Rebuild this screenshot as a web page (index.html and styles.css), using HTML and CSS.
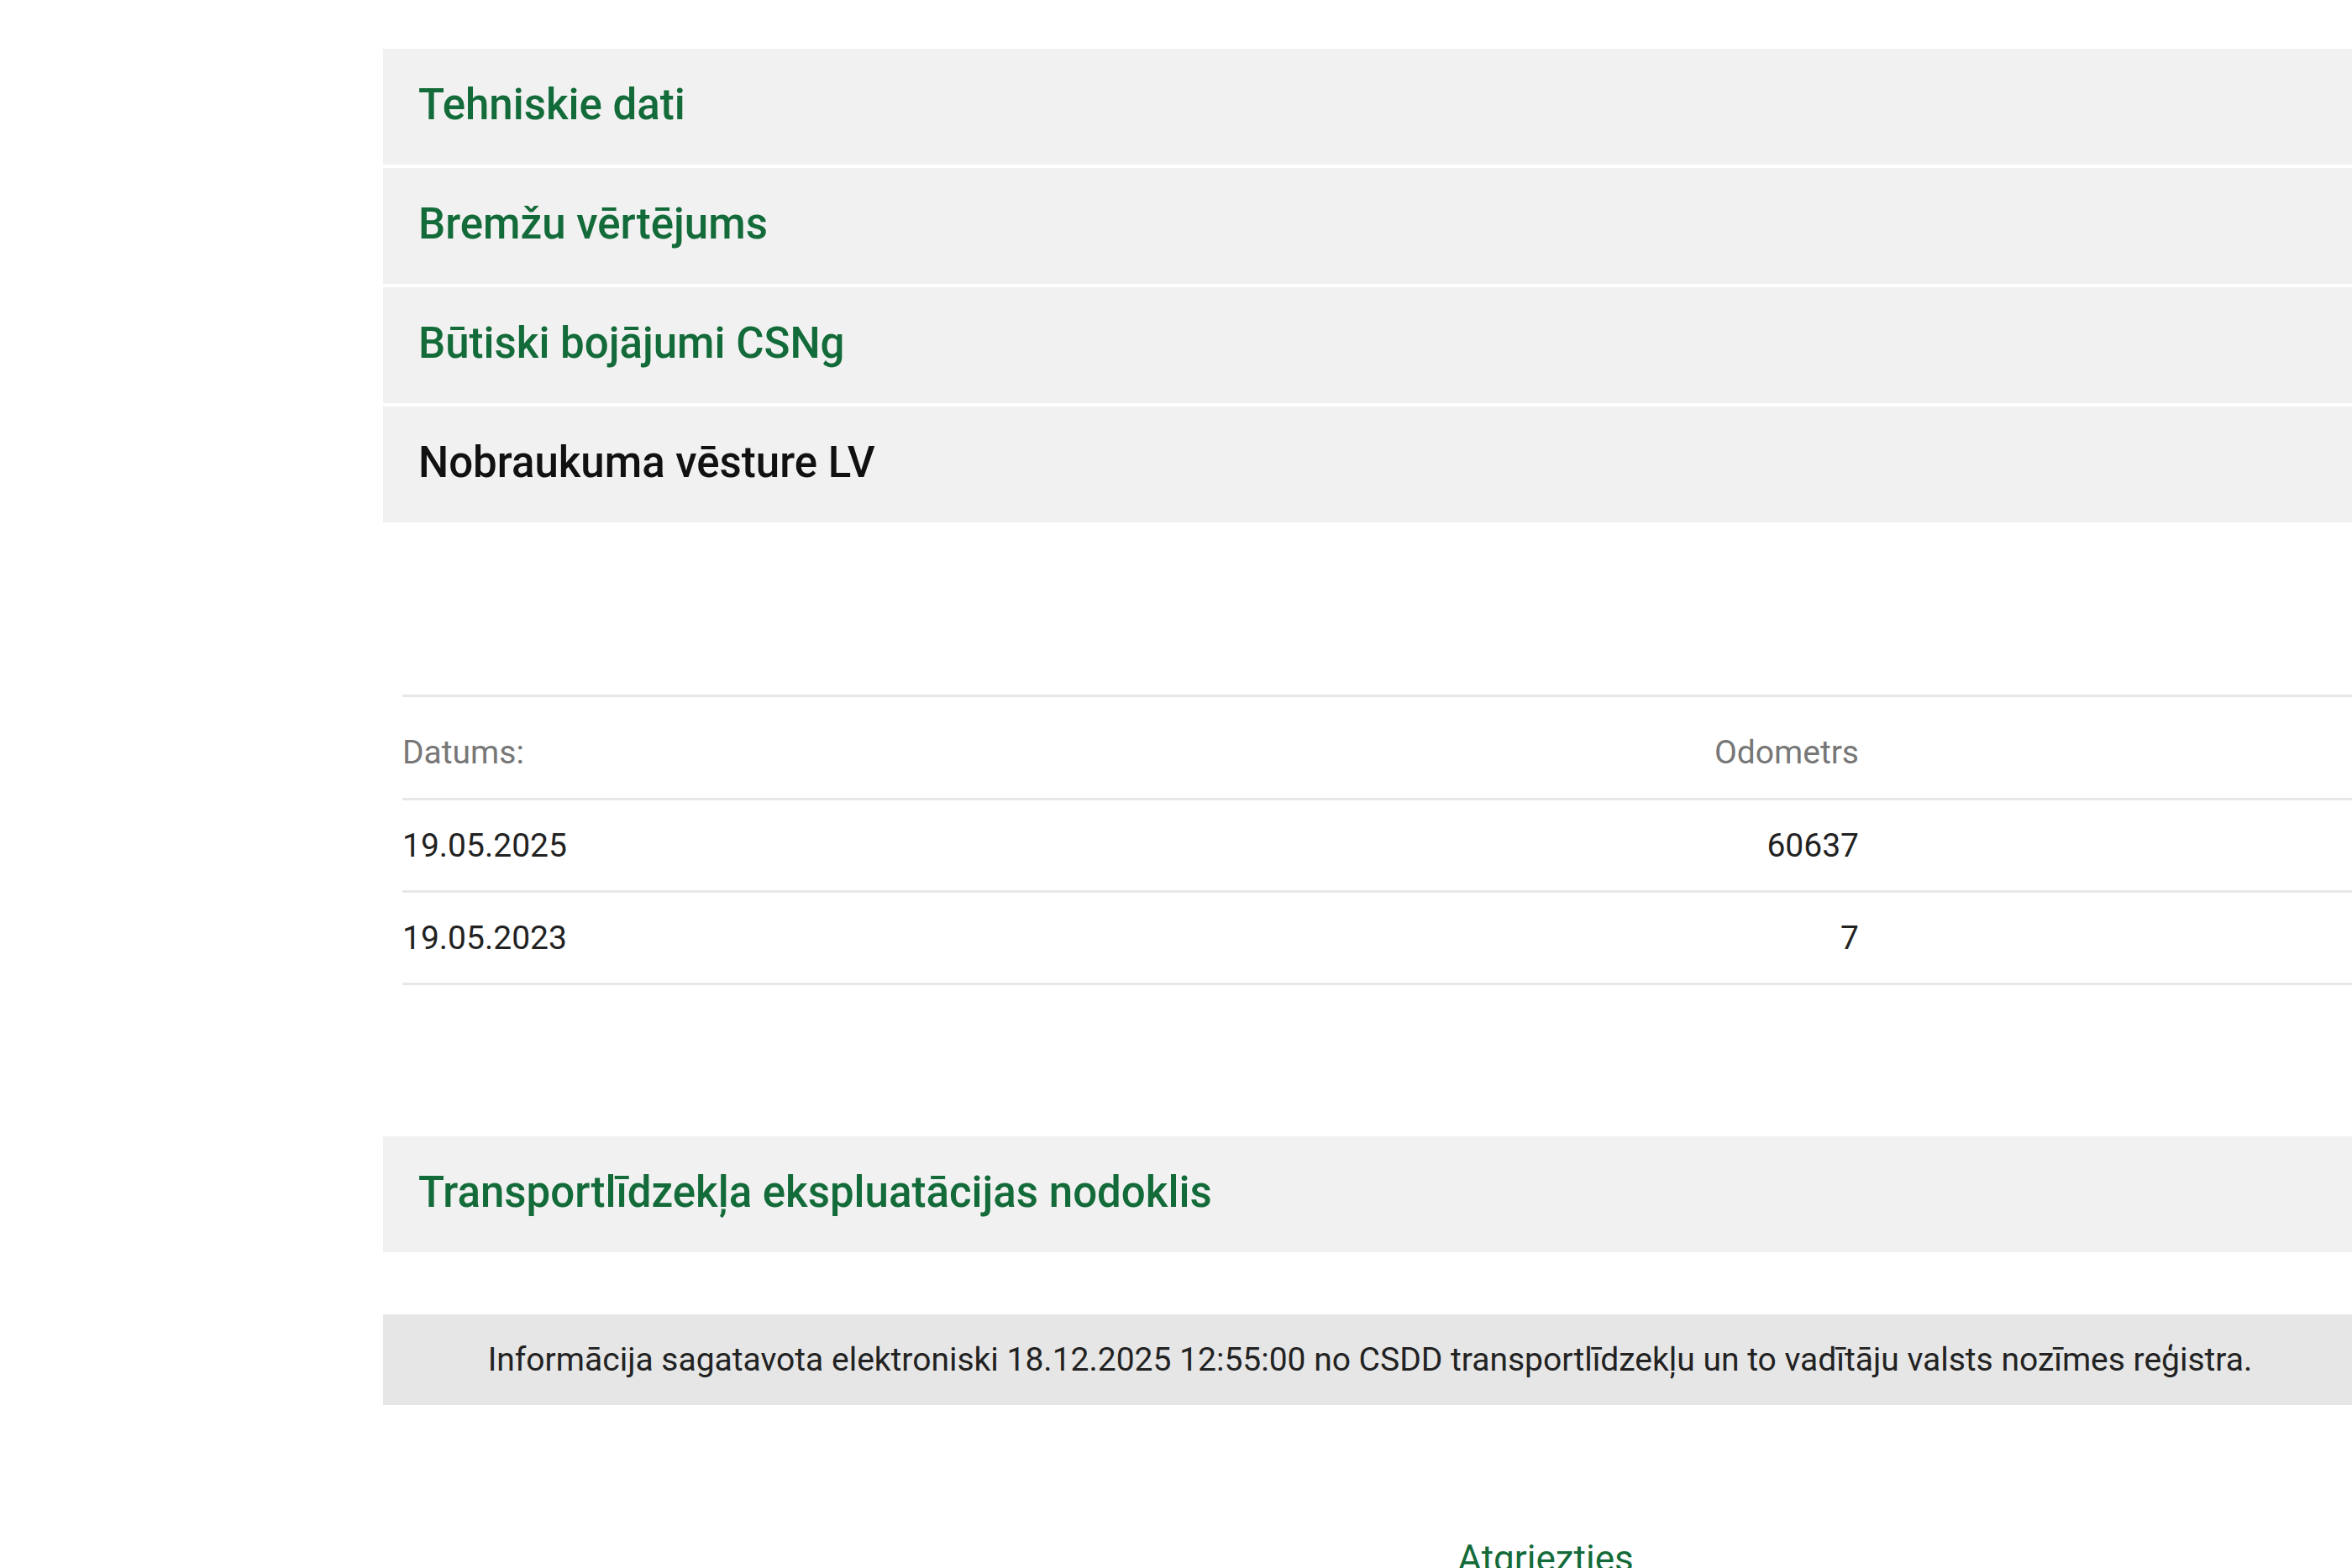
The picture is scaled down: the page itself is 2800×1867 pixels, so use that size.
FILE: index.html
```html
<!DOCTYPE html>
<html lang="lv">
<head>
<meta charset="utf-8">
<title>Transportlīdzekļa dati</title>
<link rel="stylesheet" href="styles.css">
</head>
<body>
<main class="container">
  <section class="panel"><h2 class="panel-title link">Tehniskie dati</h2></section>
  <section class="panel"><h2 class="panel-title link">Bremžu vērtējums</h2></section>
  <section class="panel"><h2 class="panel-title link">Būtiski bojājumi CSNg</h2></section>
  <section class="panel"><h2 class="panel-title">Nobraukuma vēsture LV</h2></section>

  <div class="history">
    <div class="row head">
      <div class="cell">Datums:</div>
      <div class="cell num">Odometrs</div>
      <div class="cell"></div>
    </div>
    <div class="row">
      <div class="cell">19.05.2025</div>
      <div class="cell num">60637</div>
      <div class="cell"></div>
    </div>
    <div class="row">
      <div class="cell">19.05.2023</div>
      <div class="cell num">7</div>
      <div class="cell"></div>
    </div>
  </div>

  <section class="panel tax"><h2 class="panel-title link">Transportlīdzekļa ekspluatācijas nodoklis</h2></section>

  <div class="info">Informācija sagatavota elektroniski 18.12.2025 12:55:00 no CSDD transportlīdzekļu un to vadītāju valsts nozīmes reģistra.</div>

  <div class="actions"><a class="back" href="#">Atgriezties</a></div>
</main>
</body>
</html>
```

FILE: styles.css
```css
html, body {
  margin: 0;
  padding: 0;
  background: #ffffff;
  overflow: hidden;
}

body {
  font-family: Roboto, "Liberation Sans", Arial, sans-serif;
  color: #222222;
}

.container {
  margin: 58px 0 0 456px;
  width: 2350px;
}

.panel {
  background: #f1f1f1;
  height: 138px;
  margin-bottom: 4px;
  display: flex;
  align-items: center;
  padding-left: 42px;
  padding-bottom: 6px;
  box-sizing: border-box;
}

.panel-title {
  margin: 0;
  font-size: 51px;
  font-weight: 500;
  color: #111111;
}

.panel-title.link {
  color: #146b3a;
}

.history {
  margin: 205px 0 0 23px;
  border-top: 3px solid #e7e7e7;
  font-size: 39px;
}

.row {
  display: grid;
  grid-template-columns: 1fr 300px 593px;
  align-items: center;
  height: 107px;
  border-bottom: 3px solid #e7e7e7;
}

.row.head {
  height: 123px;
  padding-top: 12px;
  box-sizing: border-box;
  color: #777777;
}

.cell.num {
  text-align: right;
}

.tax {
  margin-top: 180px;
}

.info {
  margin-top: 74px;
  background: #e6e6e6;
  height: 108px;
  display: flex;
  align-items: center;
  justify-content: center;
  font-size: 39px;
  color: #222222;
}

.actions {
  margin-top: 157px;
  display: flex;
  justify-content: center;
  padding-left: 418px;
}

.back {
  font-size: 44px;
  line-height: 52px;
  color: #146b3a;
  text-decoration: none;
}
```
